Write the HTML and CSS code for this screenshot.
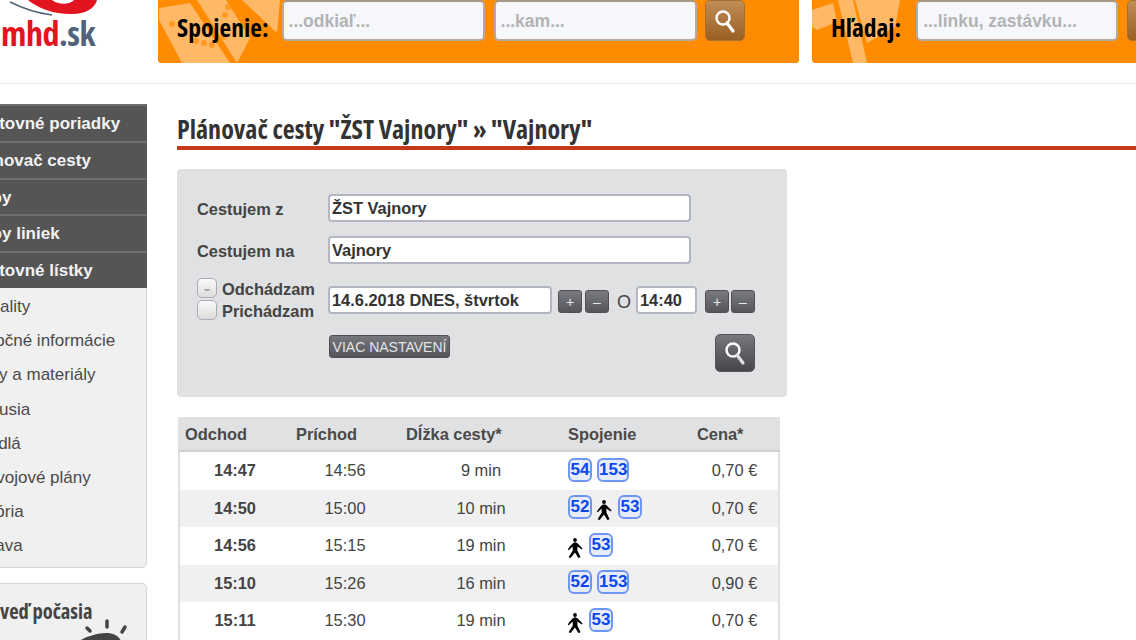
FILE: index.html
```html
<!DOCTYPE html>
<html lang="sk">
<head>
    <meta charset="UTF-8">
    <meta name="viewport" content="width=device-width, initial-scale=1.0">
    <title>Plánovač cesty</title>
    <link rel="stylesheet" href="styles.css">
</head>
<body>
<div class="page">
    <header class="top">
        <div class="logo">
            <div class="logo-text"><span class="logo-red">mhd</span><span class="logo-blue">.sk</span></div>
            <svg class="logo-swoosh" width="100" height="22" viewBox="0 0 100 22">
                <path d="M10 2 C22 8 36 13 52 15" fill="none" stroke="#50647c" stroke-width="1.5"/>
                <path d="M28 0 C38 8 52 14 72 14 C86 14 95 8 97 0 L74 0 C70 5 58 5 52 0 Z" fill="#e2141f"/>
            </svg>
        </div>
        <form class="panel panel-route">
            <svg class="panel-map" width="200" height="63" viewBox="0 0 200 63">
                <path d="M1 8 L32 3 L72 63 L24 63 L1 20 Z" fill="#ffb866"/>
                <path d="M39 0 L79 63 L92 38 L68 0 Z" fill="#ffb866"/>
                <path d="M84 0 L119 33 L122 0 Z" fill="#ffb866"/>
                <g fill="#ff9a22">
                    <circle cx="14" cy="24" r="3"/><circle cx="70" cy="7" r="3"/><circle cx="67" cy="15" r="3"/>
                    <circle cx="65" cy="37" r="3"/><circle cx="38" cy="41" r="3"/><circle cx="46" cy="43" r="3"/>
                    <circle cx="54" cy="45" r="3"/>
                </g>
            </svg>
            <span class="panel-label">Spojenie:</span>
            <input class="panel-input panel-input-route" type="text" placeholder="...odkiaľ...">
            <input class="panel-input panel-input-route" type="text" placeholder="...kam...">
            <button class="panel-btn panel-btn-route" type="button">
                <svg width="24" height="26" viewBox="0 0 24 26"><circle cx="10" cy="10" r="6.5" fill="none" stroke="#fff" stroke-width="2.4"/><path d="M14 15 L20 23" stroke="#fff" stroke-width="3.2" stroke-linecap="round"/></svg>
            </button>
        </form>
        <form class="panel panel-find">
            <svg class="panel-map" width="110" height="63" viewBox="0 0 110 63">
                <path d="M0 10 L21 3 L25 22 L5 30 L0 27 Z" fill="#ffb866"/>
                <path d="M26 0 L41 0 L55 63 L41 63 Z" fill="#ffb866"/>
                <path d="M43 0 L88 0 L83 27 L55 43 Z" fill="#ffb866"/>
            </svg>
            <span class="panel-label">Hľadaj:</span>
            <input class="panel-input panel-input-find" type="text" placeholder="...linku, zastávku...">
            <button class="panel-btn" type="button"></button>
        </form>
    </header>

    <div class="layout">
        <aside class="sidebar">
            <ul class="menu-dark">
                <li>Cestovné poriadky</li>
                <li>Plánovač cesty</li>
                <li>Mapy</li>
                <li>Mapy liniek</li>
                <li>Cestovné lístky</li>
            </ul>
            <ul class="menu-light">
                <li>Aktuality</li>
                <li>Užitočné informácie</li>
                <li>Mapy a materiály</li>
                <li>Diskusia</li>
                <li>Vozidlá</li>
                <li>Rozvojové plány</li>
                <li>História</li>
                <li>Zábava</li>
            </ul>
            <div class="weather">
                <h3>Predpoveď počasia</h3>
                <svg class="weather-sun" width="60" height="24" viewBox="0 0 60 24">
                    <path d="M30 4 V10" stroke="#444" stroke-width="3.5" stroke-linecap="round"/>
                    <path d="M10 11 L13 14" stroke="#444" stroke-width="3.5" stroke-linecap="round"/>
                    <path d="M48 10 L45 15" stroke="#444" stroke-width="3.5" stroke-linecap="round"/>
                    <path d="M2 24 C8 20 20 16 29 16 C36 16 42 19 44 24 Z" fill="#444"/>
                </svg>
            </div>
        </aside>

        <main class="content">
            <h1 class="title">Plánovač cesty "ŽST Vajnory" » "Vajnory"</h1>

            <form class="planner">
                <div class="planner-row planner-row-place">
                    <label class="planner-label">Cestujem z</label>
                    <input class="field field-place" type="text" value="ŽST Vajnory">
                </div>
                <div class="planner-row planner-row-place">
                    <label class="planner-label">Cestujem na</label>
                    <input class="field field-place" type="text" value="Vajnory">
                </div>
                <div class="planner-row planner-row-time">
                    <div class="planner-radios">
                        <div class="radio-line"><span class="radio radio-on"></span>Odchádzam</div>
                        <div class="radio-line"><span class="radio"></span>Prichádzam</div>
                    </div>
                    <input class="field field-date" type="text" value="14.6.2018 DNES, štvrtok">
                    <button class="step" type="button">+</button>
                    <button class="step" type="button">–</button>
                    <span class="planner-o">O</span>
                    <input class="field field-clock" type="text" value="14:40">
                    <button class="step step-tight" type="button">+</button>
                    <button class="step" type="button">–</button>
                </div>
                <div class="planner-row planner-row-actions">
                    <button class="more" type="button">VIAC NASTAVENÍ</button>
                    <button class="go" type="button">
                        <svg width="24" height="26" viewBox="0 0 24 26"><circle cx="10" cy="10" r="6.5" fill="none" stroke="#fff" stroke-width="2.4"/><path d="M14 15 L20 23" stroke="#dfe0e2" stroke-width="3.2" stroke-linecap="round"/></svg>
                    </button>
                </div>
            </form>

            <table class="results">
                <colgroup>
                    <col class="col-dep"><col class="col-arr"><col class="col-len"><col class="col-line"><col class="col-price">
                </colgroup>
                <thead>
                    <tr><th>Odchod</th><th>Príchod</th><th>Dĺžka cesty*</th><th>Spojenie</th><th>Cena*</th></tr>
                </thead>
                <tbody>
                    <tr>
                        <td class="dep">14:47</td><td>14:56</td><td>9 min</td>
                        <td class="lines"><span class="badge">54</span><span class="badge">153</span></td>
                        <td>0,70 €</td>
                    </tr>
                    <tr>
                        <td class="dep">14:50</td><td>15:00</td><td>10 min</td>
                        <td class="lines"><span class="badge">52</span><svg class="walk" width="16" height="20" viewBox="0 0 16 20"><use href="#walker"/></svg><span class="badge">53</span></td>
                        <td>0,70 €</td>
                    </tr>
                    <tr>
                        <td class="dep">14:56</td><td>15:15</td><td>19 min</td>
                        <td class="lines"><svg class="walk" width="16" height="20" viewBox="0 0 16 20"><use href="#walker"/></svg><span class="badge">53</span></td>
                        <td>0,70 €</td>
                    </tr>
                    <tr>
                        <td class="dep">15:10</td><td>15:26</td><td>16 min</td>
                        <td class="lines"><span class="badge">52</span><span class="badge">153</span></td>
                        <td>0,90 €</td>
                    </tr>
                    <tr>
                        <td class="dep">15:11</td><td>15:30</td><td>19 min</td>
                        <td class="lines"><svg class="walk" width="16" height="20" viewBox="0 0 16 20"><use href="#walker"/></svg><span class="badge">53</span></td>
                        <td>0,70 €</td>
                    </tr>
                </tbody>
            </table>
        </main>
    </div>
</div>

<svg width="0" height="0" class="defs">
    <symbol id="walker" viewBox="0 0 16 20">
        <circle cx="8" cy="2" r="1.9" fill="#000"/>
        <path d="M8 4.2 C6 4.4 3 8 0.8 11.6 L1.8 12.2 L5.6 8.6 L5.8 12.6 L1.6 19.2 L3.6 20 L8 14.6 L11.4 20 L13.6 19.2 L10.4 12.6 L10.4 8.6 L14.8 11.4 L15.6 10.4 C13 8 10.6 4.2 8 4.2 Z" fill="#000"/>
    </symbol>
</svg>
</body>
</html>
```

FILE: styles.css
```css
html, body {
    margin: 0;
    padding: 0;
    height: 640px;
    overflow: hidden;
    background: #fff;
}

body {
    font-family: "Liberation Sans", Arial, sans-serif;
    color: #444;
}

/* page is scrolled a bit to the right in the screenshot */
.page {
    width: 1360px;
    margin-left: -41px;
}

.defs {
    display: block;
    height: 0;
}

/* header */
.top {
    display: flex;
    gap: 13px;
    height: 83px;
    border-bottom: 1px solid #e6e6e6;
}

.logo {
    flex: none;
    width: 186px;
    position: relative;
}

.logo-swoosh {
    position: absolute;
    top: 0;
    left: 41px;
}

.logo-text {
    position: absolute;
    top: 10px;
    right: 50px;
    font-family: "Open Sans", sans-serif;
    font-size: 34px;
    font-weight: 700;
    font-stretch: 75%;
    letter-spacing: -0.5px;
    line-height: 46px;
    white-space: nowrap;
}

.logo-red { color: #e2141f; }
.logo-blue { color: #50647c; }

.panel {
    position: relative;
    flex: none;
    height: 63px;
    background-color: #ff8c00;
    border-radius: 0 0 3px 3px;
    display: flex;
    align-items: flex-start;
    overflow: hidden;
    padding-left: 19px;
    box-sizing: border-box;
}

.panel-route { width: 641px; }
.panel-find { width: 500px; }

.panel-map {
    position: absolute;
    top: 0;
    left: 0;
}

.panel-label {
    position: relative;
    font-family: "Open Sans", sans-serif;
    font-weight: 700;
    font-stretch: 75%;
    font-size: 25.5px;
    line-height: 54px;
    color: #000;
    margin-right: 13px;
    white-space: nowrap;
}

.panel-input {
    position: relative;
    height: 41px;
    margin-right: 9px;
    box-sizing: border-box;
    background: #f5f7fb;
    border: 2px solid #b5aaa0;
    border-top-color: #a89888;
    border-radius: 5px;
    padding: 2px 5px 0;
    font-family: "Liberation Sans", sans-serif;
    font-weight: 700;
    font-size: 17.5px;
    outline: none;
}

.panel-input::placeholder {
    color: #b3b3b3;
    opacity: 1;
}

.panel-input-route { width: 203px; }
.panel-input-find { width: 202px; margin-left: 2px; }

.panel-btn {
    position: relative;
    width: 40px;
    height: 41px;
    padding: 0;
    border: 1px solid #a8702e;
    border-radius: 5px;
    background: linear-gradient(#c08d57, #995f22);
    display: flex;
    align-items: center;
    justify-content: center;
}

.panel-btn-route { margin-left: -1px; }

/* two columns below the header */
.layout {
    display: flex;
    gap: 30px;
    padding-top: 20px;
}

.sidebar {
    width: 188px;
    flex: none;
}

.menu-dark, .menu-light {
    list-style: none;
    margin: 0;
    padding: 0;
}

.menu-dark {
    background: #555;
    border-radius: 3px 3px 0 0;
}

.menu-dark li {
    height: 36.8px;
    box-sizing: border-box;
    padding-left: 9px;
    border-top: 2px solid #6e6e6e;
    line-height: 35px;
    font-size: 17px;
    font-weight: 700;
    color: #f2f2f2;
    white-space: nowrap;
}

.menu-light {
    background: #f0f0f0;
    border: 1px solid #d6d6d6;
    border-top: 0;
    border-radius: 0 0 5px 5px;
    padding: 2px 0 4px;
}

.menu-light li {
    height: 34.2px;
    padding-left: 6px;
    line-height: 34px;
    font-size: 17px;
    color: #4a4a4a;
    white-space: nowrap;
}

.weather {
    position: relative;
    height: 70px;
    margin-top: 15px;
    background: #f0f0f0;
    border: 1px solid #d6d6d6;
    border-radius: 5px;
}

.weather h3 {
    margin: 0;
    padding: 13px 0 0;
    text-indent: -17px;
    font-family: "Open Sans", sans-serif;
    font-stretch: 75%;
    font-size: 20.5px;
    font-weight: 700;
    line-height: 28px;
    color: #444;
    white-space: nowrap;
}

.weather-sun {
    position: absolute;
    top: 33px;
    left: 117px;
}

/* main column */
.content {
    flex: 1;
    min-width: 0;
}

.title {
    margin: 0;
    height: 42px;
    border-bottom: 4px solid #c5381a;
    font-family: "Open Sans", sans-serif;
    font-stretch: 75%;
    font-size: 26px;
    font-weight: 700;
    line-height: 50px;
    color: #333;
    white-space: nowrap;
}

.planner {
    width: 610px;
    height: 228px;
    margin-top: 19px;
    background: #e0e1e3;
    border-radius: 4px;
    box-sizing: border-box;
    padding: 25px 0 0 20px;
}

.planner-row {
    display: flex;
    align-items: center;
}

.planner-row-place {
    height: 28px;
    margin-bottom: 14px;
}

.planner-label {
    width: 131px;
    font-size: 16.4px;
    font-weight: 700;
    color: #444;
    padding-top: 3px;
}

.field {
    box-sizing: border-box;
    height: 28px;
    background: #fff;
    border: 2px solid #b4b6c4;
    border-radius: 4px;
    padding: 1px 2px 0;
    font-family: "Liberation Sans", sans-serif;
    font-size: 16.4px;
    font-weight: 700;
    color: #333;
    outline: none;
}

.field-place { width: 363px; }
.field-date { width: 224px; margin-right: 6px; }
.field-clock { width: 61px; margin-right: 8px; }

.planner-row-time {
    height: 44px;
}

.planner-radios {
    width: 131px;
    margin-top: -1px;
    font-size: 16.4px;
    font-weight: 700;
    color: #444;
}

.radio-line {
    display: flex;
    align-items: center;
    height: 22px;
    padding-top: 1px;
    margin-bottom: -1px;
    white-space: nowrap;
}

.radio {
    box-sizing: border-box;
    width: 20px;
    height: 20px;
    margin: -3px 5px 0 0;
    border: 1px solid #a9abb8;
    border-radius: 5px;
    background: linear-gradient(#fafafa, #dcdcdc);
    position: relative;
}

.radio-on::after {
    content: "";
    position: absolute;
    left: 6px;
    top: 10px;
    width: 6px;
    height: 2px;
    border-radius: 0 0 4px 4px;
    background: #a8a8a8;
}

.step {
    box-sizing: border-box;
    width: 24px;
    height: 23px;
    padding: 0;
    margin: 3px 3px 0 0;
    border: 1px solid #4f5055;
    border-radius: 3px;
    background: linear-gradient(#7a7b80, #55565b);
    color: #e8e8e8;
    font-family: "Liberation Sans", sans-serif;
    font-size: 14px;
    line-height: 20px;
}

.step-tight { margin-right: 2px; }

.planner-o {
    width: 19px;
    margin-left: 5px;
    padding-top: 5px;
    font-size: 18px;
    color: #444;
}

.planner-row-actions {
    width: 426px;
    justify-content: space-between;
    align-items: flex-start;
    margin: 12px 0 0 132px;
}

.more {
    box-sizing: border-box;
    width: 121px;
    height: 23px;
    margin-top: 1px;
    padding: 0;
    border: 1px solid #4f5055;
    border-radius: 3px;
    background: linear-gradient(#76777c, #55565b);
    color: #e4e4e4;
    font-family: "Liberation Sans", sans-serif;
    font-size: 14px;
    white-space: nowrap;
}

.go {
    width: 40px;
    height: 38px;
    padding: 0;
    border: 1px solid #55565b;
    border-radius: 5px;
    background: linear-gradient(#77787d, #46474c);
    display: flex;
    align-items: center;
    justify-content: center;
}

/* results table */
.results {
    width: 600px;
    margin: 20px 0 0 1px;
    table-layout: fixed;
    border-collapse: collapse;
    border: 2px solid #e0e1e3;
    font-size: 16.4px;
    color: #444;
}

.col-dep { width: 111px; }
.col-arr { width: 110px; }
.col-len { width: 162px; }
.col-line { width: 129px; }
.col-price { width: 88px; }

.results th {
    height: 31px;
    padding: 0 0 0 6px;
    background: #e0e1e3;
    border-bottom: 2px solid #cfd0d2;
    text-align: left;
    font-size: 16.4px;
    font-weight: 700;
    color: #4a4a4a;
}

.results th:first-child {
    padding-left: 5px;
}

.results td {
    height: 37.5px;
    padding: 0;
    text-align: center;
}

.results tbody tr:nth-child(even) td {
    background: #f0f0f0;
}

.results td.dep {
    font-weight: 700;
}

.results td.lines {
    text-align: left;
    padding-left: 6px;
    white-space: nowrap;
}

.badge {
    display: inline-block;
    box-sizing: border-box;
    height: 24px;
    min-width: 24px;
    padding: 0;
    margin-right: 5px;
    border: 2px solid #6f96f4;
    border-radius: 6px;
    background: #e6ecfb;
    color: #0a46f0;
    font-size: 17px;
    font-weight: 700;
    line-height: 20px;
    text-align: center;
    vertical-align: 5px;
}

.walk {
    margin: 0 6px 0 -1px;
    vertical-align: -3px;
}
```
